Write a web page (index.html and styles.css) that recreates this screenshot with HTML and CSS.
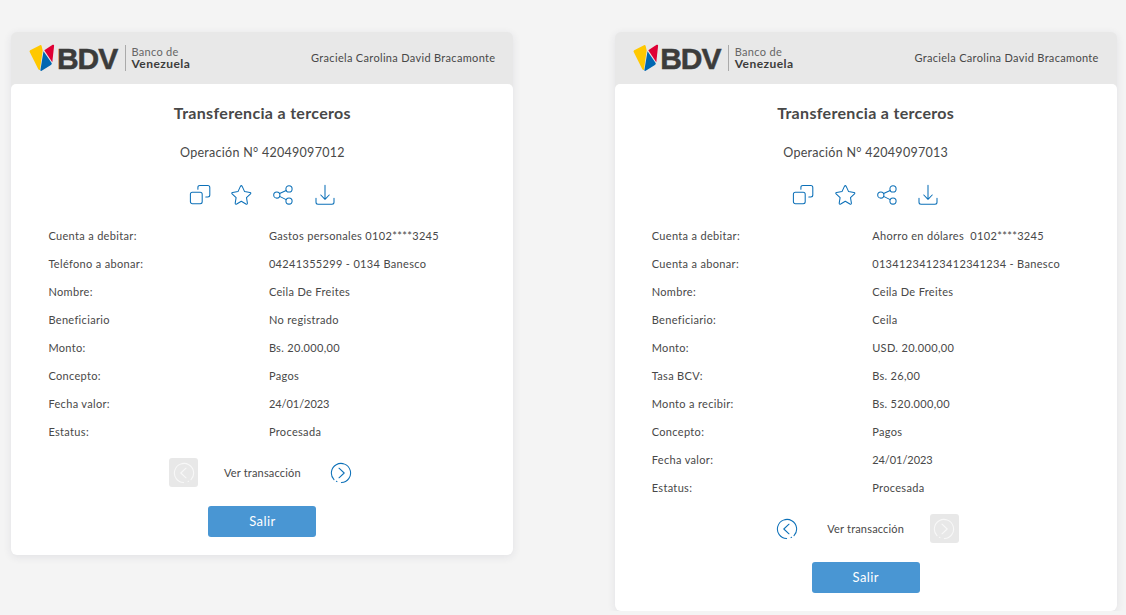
FILE: index.html
```html
<!DOCTYPE html>
<html lang="es">
<head>
<meta charset="utf-8">
<title>Banco de Venezuela - Transferencia a terceros</title>
<link rel="stylesheet" href="styles.css">
</head>
<body>
<svg class="defs" width="0" height="0" aria-hidden="true">
  <symbol id="logo" viewBox="0 0 26 28">
    <path fill="#ffc800" d="M1.2 6.2 11 1.2Q12.4.8 12.7 2.3L13.7 6.6 10.9 26Q9.9 26.3 9.2 24.9L.6 7.7Q.3 6.8 1.2 6.2Z"/>
    <path fill="#df0035" d="m15.3 6.3 8.3-5.5q1.6-.6 1.5 1l-1.8 16.4Z"/>
    <path fill="#0067b1" d="M14.5 7.2 22.8 19.2Q22.8 20.6 21.5 21.3L12.7 26.8Q11.3 27.6 11.4 25.9Z"/>
  </symbol>
  <symbol id="copy" viewBox="0 0 22 22">
    <rect x="1.4" y="8.2" width="11.8" height="11.6" rx="2"/>
    <path d="M8.9 5.2V3.4q0-2 2-2h7.9q2 0 2 2v7.5q0 2-2 2h-2"/>
  </symbol>
  <symbol id="star" viewBox="0 0 22 22">
    <path d="M10.4 2.4q.9-1.6 1.8 0l2.4 5.2 5.3.8q1.5.4.6 1.5l-4 3.8.9 5.4q0 1.6-1.5.9l-4.6-2.7L6.7 20q-1.5.7-1.5-.9l.9-5.4-4-3.8q-.9-1.1.6-1.5L8 7.6Z"/>
  </symbol>
  <symbol id="share" viewBox="0 0 22 22">
    <circle cx="4.8" cy="11" r="3.1"/><circle cx="17" cy="4.9" r="3.1"/><circle cx="17" cy="17" r="3.1"/>
    <path d="m7.6 9.5 6.6-3.1M7.6 12.4l6.6 3.2"/>
  </symbol>
  <symbol id="download" viewBox="0 0 22 22">
    <path d="M11 1.3v14M6.8 11l4.2 4.3 4.2-4.3M2 14.3v4q0 2 2 2h14q2 0 2-2v-4"/>
  </symbol>
  <symbol id="next" viewBox="0 0 22 22">
    <path d="M4 17.6A9.6 9.6 0 1 1 11.4 20.6M6.4 19.3l.6.3M9 6.2l5.2 4.8L9 15.8"/>
  </symbol>
  <symbol id="prev" viewBox="0 0 22 22">
    <path d="M18 17.6A9.6 9.6 0 1 0 10.6 20.6M15.6 19.3l-.6.3M13 6.2 7.8 11l5.2 4.8"/>
  </symbol>
</svg>
<main class="page">
  <section class="card">
    <header class="card-header">
      <div class="brand">
        <svg class="logo"><use href="#logo"/></svg>
        <span class="bdv">BDV</span>
        <span class="brand-name"><span class="brand-top">Banco de</span><b>Venezuela</b></span>
      </div>
      <span class="user">Graciela Carolina David Bracamonte</span>
    </header>
    <div class="card-body">
      <h1>Transferencia a terceros</h1>
      <p class="operation">Operación N° 42049097012</p>
      <div class="actions">
        <svg><use href="#copy"/></svg><svg><use href="#star"/></svg><svg><use href="#share"/></svg><svg><use href="#download"/></svg>
      </div>
      <dl class="details">
        <dt>Cuenta a debitar:</dt><dd>Gastos personales 0102****3245</dd>
        <dt>Teléfono a abonar:</dt><dd>04241355299 - 0134 Banesco</dd>
        <dt>Nombre:</dt><dd>Ceila De Freites</dd>
        <dt>Beneficiario</dt><dd>No registrado</dd>
        <dt>Monto:</dt><dd>Bs. 20.000,00</dd>
        <dt>Concepto:</dt><dd>Pagos</dd>
        <dt>Fecha valor:</dt><dd class="date">24/01/2023</dd>
        <dt>Estatus:</dt><dd>Procesada</dd>
      </dl>
      <nav class="pager">
        <span class="step disabled"><svg><use href="#prev"/></svg></span>
        <span class="pager-label">Ver transacción</span>
        <span class="step"><svg><use href="#next"/></svg></span>
      </nav>
      <button class="exit">Salir</button>
    </div>
  </section>
  <section class="card">
    <header class="card-header">
      <div class="brand">
        <svg class="logo"><use href="#logo"/></svg>
        <span class="bdv">BDV</span>
        <span class="brand-name"><span class="brand-top">Banco de</span><b>Venezuela</b></span>
      </div>
      <span class="user">Graciela Carolina David Bracamonte</span>
    </header>
    <div class="card-body">
      <h1>Transferencia a terceros</h1>
      <p class="operation">Operación N° 42049097013</p>
      <div class="actions">
        <svg><use href="#copy"/></svg><svg><use href="#star"/></svg><svg><use href="#share"/></svg><svg><use href="#download"/></svg>
      </div>
      <dl class="details">
        <dt>Cuenta a debitar:</dt><dd>Ahorro en dólares&nbsp; 0102****3245</dd>
        <dt>Cuenta a abonar:</dt><dd>01341234123412341234 - Banesco</dd>
        <dt>Nombre:</dt><dd>Ceila De Freites</dd>
        <dt>Beneficiario:</dt><dd>Ceila</dd>
        <dt>Monto:</dt><dd>USD. 20.000,00</dd>
        <dt>Tasa BCV:</dt><dd>Bs. 26,00</dd>
        <dt>Monto a recibir:</dt><dd>Bs. 520.000,00</dd>
        <dt>Concepto:</dt><dd>Pagos</dd>
        <dt>Fecha valor:</dt><dd class="date">24/01/2023</dd>
        <dt>Estatus:</dt><dd>Procesada</dd>
      </dl>
      <nav class="pager">
        <span class="step"><svg><use href="#prev"/></svg></span>
        <span class="pager-label">Ver transacción</span>
        <span class="step disabled"><svg><use href="#next"/></svg></span>
      </nav>
      <button class="exit">Salir</button>
    </div>
  </section>
</main>
</body>
</html>
```
FILE: styles.css
```css
* { box-sizing: border-box; margin: 0; padding: 0; }
body { background: #f4f4f4; color: #484848; font: 11px/28px Lato, "Open Sans", sans-serif; overflow: hidden; }
svg { display: block; width: 22px; height: 22px; }
.defs { position: absolute; width: 0; height: 0; }
.page { display: flex; align-items: flex-start; gap: 101.3px; padding: 32px 0 0 11.4px; }
.card { width: 502px; flex: none; background: #e8e8e8; border-radius: 6px; box-shadow: 0 2px 8px rgba(40, 45, 75, .09); }
.card-header { height: 52px; display: flex; justify-content: space-between; align-items: center; padding: 0 18px; }
.brand { display: flex; align-items: center; height: 28px; }
.brand .logo { width: 26px; height: 28px; }
.bdv { font: bold 30px/28px "Liberation Sans", Arial, sans-serif; color: #3c3c3b; -webkit-text-stroke: .5px #3c3c3b; margin-left: 1.5px; padding-top: 1px; letter-spacing: -1px; width: 68.1px; }
.brand-name { border-left: 1px solid #aaa; height: 26px; padding: 0 0 0 5.5px; font-size: 11px; letter-spacing: .3px; }
.brand-name b, .brand-top { display: block; line-height: 13px; }
.brand-top { color: #666; }
.brand-name b { color: #3c3c3b; font-size: 12px; line-height: 12px; letter-spacing: .45px; }
.user { font-size: 11px; letter-spacing: .32px; }
.card-body { background: #fff; border-radius: 5px 5px 6px 6px; padding: 18.5px 0 18.5px; display: flex; flex-direction: column; align-items: center; }
h1 { font-size: 16px; line-height: 20px; letter-spacing: .32px; }
.operation { font-size: 12.5px; line-height: 20px; margin-top: 20.5px; letter-spacing: .28px; }
.actions { display: flex; gap: 19.8px; margin-top: 21px; height: 22px; }
.actions svg, .step svg { fill: none; stroke: #0c70b8; stroke-width: 1.05; stroke-linecap: round; stroke-linejoin: round; }
.details { display: grid; grid-template-columns: 220.5px 1fr; width: 100%; padding-left: 37px; margin-top: 16px; letter-spacing: .33px; }
.details .date { letter-spacing: -.05px; }
.pager { display: flex; align-items: center; height: 29px; margin-top: 12.2px; }
.pager-label { width: 77px; margin: 0 25.5px; text-align: center; white-space: nowrap; letter-spacing: .18px; }
.step { width: 29px; height: 29px; display: grid; place-items: center; border-radius: 3px; }
.step.disabled { background: #e8e8e8; }
.step.disabled svg { stroke: #f8f8f8; }
.exit { width: 108px; height: 31px; margin-top: 18.8px; border: 0; border-radius: 3px; background: #4996d3; color: #fff; font: 13px/31px Lato, sans-serif; letter-spacing: .4px; }
```
